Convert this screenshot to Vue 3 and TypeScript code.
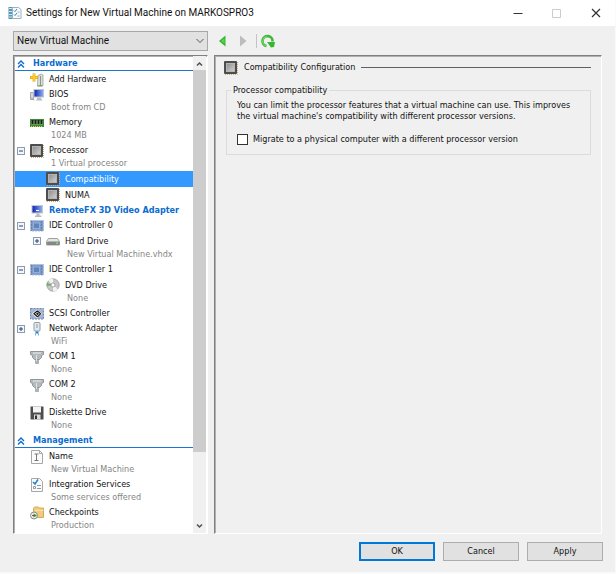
<script setup lang="ts">
import { ref } from 'vue'

interface Item {
  id: string
  label: string
  detail?: string
  icon: string
  level: 0 | 1
  toggle?: 'open' | 'closed'
  strong?: boolean
}

interface Section {
  title: string
  items: Item[]
}

const sections: Section[] = [
  {
    title: 'Hardware',
    items: [
      { id: 'add', label: 'Add Hardware', icon: 'add', level: 0 },
      { id: 'bios', label: 'BIOS', detail: 'Boot from CD', icon: 'bios', level: 0 },
      { id: 'memory', label: 'Memory', detail: '1024 MB', icon: 'memory', level: 0 },
      { id: 'cpu', label: 'Processor', detail: '1 Virtual processor', icon: 'chip', level: 0, toggle: 'open' },
      { id: 'compat', label: 'Compatibility', icon: 'chip', level: 1 },
      { id: 'numa', label: 'NUMA', icon: 'chip', level: 1 },
      { id: 'remotefx', label: 'RemoteFX 3D Video Adapter', icon: 'monitor', level: 0, strong: true },
      { id: 'ide0', label: 'IDE Controller 0', icon: 'ide', level: 0, toggle: 'open' },
      { id: 'hdd', label: 'Hard Drive', detail: 'New Virtual Machine.vhdx', icon: 'drive', level: 1, toggle: 'closed' },
      { id: 'ide1', label: 'IDE Controller 1', icon: 'ide', level: 0, toggle: 'open' },
      { id: 'dvd', label: 'DVD Drive', detail: 'None', icon: 'disc', level: 1 },
      { id: 'scsi', label: 'SCSI Controller', icon: 'scsi', level: 0 },
      { id: 'net', label: 'Network Adapter', detail: 'WiFi', icon: 'network', level: 0, toggle: 'closed' },
      { id: 'com1', label: 'COM 1', detail: 'None', icon: 'serial', level: 0 },
      { id: 'com2', label: 'COM 2', detail: 'None', icon: 'serial', level: 0 },
      { id: 'floppy', label: 'Diskette Drive', detail: 'None', icon: 'floppy', level: 0 },
    ],
  },
  {
    title: 'Management',
    items: [
      { id: 'name', label: 'Name', detail: 'New Virtual Machine', icon: 'name', level: 0 },
      { id: 'integration', label: 'Integration Services', detail: 'Some services offered', icon: 'checklist', level: 0 },
      { id: 'checkpoints', label: 'Checkpoints', detail: 'Production', icon: 'folder', level: 0 },
    ],
  },
]

const selected = ref('compat')
const machine = ref('New Virtual Machine')
const migrate = ref(false)
</script>

<template>
  <div class="window">
    <svg class="defs" aria-hidden="true">
      <defs>
        <linearGradient id="metal" x1="0" y1="0" x2="1" y2="1">
          <stop offset="0" stop-color="#8d8d8d" />
          <stop offset="1" stop-color="#d2d2d2" />
        </linearGradient>
        <linearGradient id="screen" x1="0" y1="0" x2="1" y2="0">
          <stop offset="0" stop-color="#0a1fb0" />
          <stop offset="1" stop-color="#8fb4f2" />
        </linearGradient>
      </defs>
      <symbol id="chip" viewBox="0 0 14 14">
        <path d="M1 13.500h12.500V1" fill="none" stroke="#c9ab7c" stroke-dasharray="1 1" />
        <rect x="0" y="0" width="13" height="13" rx="1" fill="#4d4d4d" />
        <rect x="2.500" y="2.500" width="8" height="8" fill="url(#metal)" stroke="#b4b4b4" />
      </symbol>
      <symbol id="add" viewBox="0 0 14 14">
        <path d="M8 2.500l3.500-1.500 1.500 1v10.500l-1 .8H7.500z" fill="#dcdedc" stroke="#9a9d9a" stroke-width=".8" />
        <path d="M10.500 3v9.500" stroke="#8f948f" />
        <path d="M8.500 12.500h4" stroke="#6fae5e" />
        <path d="M4 .5v8M0 4.500h8" stroke="#d9a21c" stroke-width="2.800" />
        <path d="M4 1v7M.5 4.500h7" stroke="#ffc926" stroke-width="2" />
      </symbol>
      <symbol id="bios" viewBox="0 0 14 14">
        <path d="M.5 4.500h3v7h-3z" fill="#d7dad9" stroke="#a3a8a8" />
        <rect x="4" y="1.500" width="9.500" height="7.500" fill="url(#screen)" stroke="#bcc4cf" />
        <path d="M7.500 9.500h3l2 3H6z" fill="#b9bdbc" />
        <path d="M1 9.500l3 3" stroke="#989c9b" />
      </symbol>
      <symbol id="monitor" viewBox="0 0 14 14">
        <rect x="2" y="1.500" width="10.500" height="7.500" fill="url(#screen)" stroke="#c2c8ce" />
        <path d="M6.500 9.500h3v2h2V13h-6.500v-1.500h1.500z" fill="#b8bbbd" />
        <path d="M6 6.500h3" stroke="#fff" />
      </symbol>
      <symbol id="memory" viewBox="0 0 14 14">
        <rect y="3" width="14" height="8" fill="#3b8a34" />
        <path d="M1 4.500h12v4H1z" fill="#8db779" />
        <path d="M1.500 4h2v4h-2zM4.500 4h2v4h-2zM7.500 4h2v4h-2zM10.500 4h2v4h-2z" fill="#17231a" />
        <path d="M1 10.500h12" stroke="#e1c763" stroke-dasharray="1 1" />
      </symbol>
      <symbol id="ide" viewBox="0 0 14 14">
        <rect x=".5" y="1.500" width="13" height="10.500" fill="#7d9ccc" stroke="#a9bbd9" stroke-dasharray="2 1" />
        <rect x="3.500" y="4" width="6" height="5.500" fill="#6285b9" stroke="#93aed8" />
        <path d="M11.500 2v10M1.500 2v10" stroke="#5f80b3" stroke-dasharray="2 1" />
      </symbol>
      <symbol id="scsi" viewBox="0 0 14 14">
        <rect x=".5" y="1.500" width="13" height="10.500" fill="#a3b5d3" stroke="#6e88b2" stroke-dasharray="2 1" />
        <path d="M7 2.500l5 4.300-5 4.200-5-4.200z" fill="#fff" />
        <path d="M7.500 3.800L4 6.800l3.500 3M7.500 3.800L10.500 6.800l-3 3" fill="none" stroke="#161616" stroke-width="1.200" />
        <circle cx="7.500" cy="6.800" r="1.200" fill="#222" />
      </symbol>
      <symbol id="drive" viewBox="0 0 14 14">
        <path d="M2.500 4.500h9l2 3v3.500H.5V7.500z" fill="#e5e5e5" stroke="#a0a0a0" />
        <rect x="1" y="7.500" width="12.500" height="3.500" rx="1" fill="#848784" />
        <rect x="10" y="8.500" width="2" height="1.500" fill="#65ef58" />
      </symbol>
      <symbol id="disc" viewBox="0 0 14 14">
        <circle cx="7" cy="7" r="6.200" fill="#c7c7c7" stroke="#999" stroke-width=".8" />
        <path d="M7 7L2 2.500A6.500 6.500 0 0 1 7 .8zM7 7l5 4.500a6.500 6.500 0 0 1-5 1.700z" fill="#f3f3f3" />
        <path d="M7 7L.9 8V5z" fill="#62b45f" />
        <circle cx="7" cy="7" r="2" fill="#fff" stroke="#888" stroke-width=".7" />
      </symbol>
      <symbol id="network" viewBox="0 0 14 14">
        <rect x="4" y=".5" width="6" height="8.500" rx="1" fill="#e1e8ee" stroke="#8e9ba5" />
        <path d="M7 2v4" stroke="#8a98a4" />
        <path d="M5.500 9.500h3v2h-3z" fill="#247ccc" />
        <path d="M5.500 11.500v2M8.500 11.500v2" stroke="#63a9e4" />
      </symbol>
      <symbol id="serial" viewBox="0 0 14 14">
        <path d="M.5 1.500h13v3l-2 1v2l-2 2h-5l-2-2v-2l-2-1z" fill="#b5bbbd" stroke="#8f9698" />
        <path d="M3 3h8" stroke="#e8ecec" />
        <path d="M5.500 9.500h3v4h-3z" fill="#aeb4b5" stroke="#8f9698" stroke-width=".6" />
        <path d="M6.500 5v6" stroke="#e0e4e5" />
      </symbol>
      <symbol id="floppy" viewBox="0 0 14 14">
        <path d="M.5.500h13v13H.5z" fill="#4b4c4e" />
        <path d="M3 .5h8v6H3z" fill="#f4f4f4" />
        <path d="M4 8.500h6.500v5H4z" fill="#d9d9d9" />
        <path d="M5 9.500h2v3.500H5z" fill="#313131" />
      </symbol>
      <symbol id="name" viewBox="0 0 14 14">
        <path d="M1.500.5h8l3 3v10h-11z" fill="#fafafa" stroke="#a8a8a8" />
        <path d="M9.500.5v3h3" fill="none" stroke="#a8a8a8" />
        <path d="M4.500 4h4M6.500 4v6.500M4.500 10.500h4" stroke="#777" />
      </symbol>
      <symbol id="checklist" viewBox="0 0 14 14">
        <path d="M1.500.5h8l3 3v10h-11z" fill="#fafafa" stroke="#a8a8a8" />
        <path d="M3 4l2 2 3-4.500" fill="none" stroke="#2384d1" stroke-width="1.600" />
        <path d="M7 7.500h4M7 10.500h4" stroke="#8c9aa4" />
        <path d="M3.500 8.500h2v2h-2z" fill="#fff" stroke="#9a9a9a" />
      </symbol>
      <symbol id="folder" viewBox="0 0 14 14">
        <path d="M3.500 2.500l1-1.500h4l1 1h4v9.500h-10z" fill="#f0cb7c" stroke="#d4ab58" />
        <path d="M5 4.500h8.500" stroke="#fbe4ae" />
        <circle cx="4" cy="9.500" r="3.500" fill="#eceeec" stroke="#8b8b8b" />
        <path d="M3.500 7.500l3.500 2-3.500 2z" fill="#35933b" />
        <path d="M4 9.500H2" stroke="#b43b2c" />
      </symbol>
    </svg>

    <header class="titlebar">
      <svg class="app-icon" viewBox="0 0 14 14" aria-hidden="true">
        <path d="M.5 1h5v12h-5z" fill="#5a93b3" />
        <path d="M1 2.500h3.500M1 5.500h3.500M1 8.500h3.500M1 11h3.500" stroke="#cfe9f5" />
        <path d="M4.500 1.500h6l2.500 2v9H4.500z" fill="#f7fbfd" stroke="#9db2bf" />
        <path d="M6 4.500l1 1 2-2.500M6 8.500l1 1 2-2.500" fill="none" stroke="#2b86c4" />
        <path d="M9.500 6h2M9.500 10h2" stroke="#8fa4b0" />
      </svg>
      <h1 class="title">Settings for New Virtual Machine on MARKOSPRO3</h1>
      <div class="window-buttons">
        <button type="button" aria-label="Minimize">
          <svg viewBox="0 0 10 10"><path d="M.5 5.500h9" stroke="#333" /></svg>
        </button>
        <button type="button" aria-label="Maximize" disabled>
          <svg viewBox="0 0 10 10"><path d="M.5 1.500h8v8h-8z" fill="none" stroke="#ccc" /></svg>
        </button>
        <button type="button" aria-label="Close">
          <svg viewBox="0 0 10 10"><path d="M1 1l8 8M9 1L1 9" fill="none" stroke="#333" stroke-width="1.200" /></svg>
        </button>
      </div>
    </header>

    <div class="toolbar">
      <div class="picker">
        <select v-model="machine" aria-label="Virtual machine">
          <option>New Virtual Machine</option>
        </select>
        <svg class="picker-arrow" viewBox="0 0 8 6" aria-hidden="true">
          <path d="M.5 1L4 4.500 7.500 1" fill="none" stroke="#555" />
        </svg>
      </div>
      <button type="button" class="tool" aria-label="Back">
        <svg viewBox="0 0 14 14"><path d="M9.500 1.500v11L3 7z" fill="#2fb52b" /><path d="M8.500 4v5.500L5 7z" fill="#5ad24e" /></svg>
      </button>
      <button type="button" class="tool" aria-label="Forward" disabled>
        <svg viewBox="0 0 14 14"><path d="M4 1.500v11L10.500 7z" fill="#bcbcbc" /></svg>
      </button>
      <span class="divider"></span>
      <button type="button" class="tool" aria-label="Refresh">
        <svg viewBox="0 0 14 14">
          <path d="M5.500 12A5 5 0 1 1 11.500 7.500" fill="none" stroke="#3fb837" stroke-width="2.600" />
          <path d="M5.500 11.800A4.700 4.700 0 0 1 6 2.500" fill="none" stroke="#7ddc73" />
          <path d="M6 8h8l-1 5-3 .5z" fill="#36b730" />
        </svg>
      </button>
    </div>

    <main class="body">
      <nav class="sidebar" aria-label="Settings">
        <div class="list">
          <section v-for="section in sections" :key="section.title">
            <h2 class="section-title">
              <svg class="collapse" viewBox="0 0 8 8" aria-hidden="true">
                <path d="M1 4l3-3 3 3M1 7.500l3-3 3 3" fill="none" stroke="#0a6bd0" stroke-width="1.400" />
              </svg>
              {{ section.title }}
            </h2>
            <ul>
              <li v-for="item in section.items" :key="item.id" :class="{ child: item.level === 1 }">
                <button
                  type="button"
                  class="row"
                  :class="{ selected: selected === item.id, strong: item.strong }"
                  @click="selected = item.id"
                >
                  <svg class="toggle" viewBox="0 0 8 8" aria-hidden="true">
                    <g v-if="item.toggle">
                      <rect x=".5" y=".5" width="7" height="7" fill="#f4f6f9" stroke="#8d9db0" />
                      <path d="M2 4h4" stroke="#23477d" />
                      <path v-if="item.toggle === 'closed'" d="M4 2v4" stroke="#23477d" />
                    </g>
                  </svg>
                  <svg class="icon" viewBox="0 0 14 14" aria-hidden="true"><use :href="'#' + item.icon" /></svg>
                  <span class="label">{{ item.label }}</span>
                  <span v-if="item.detail" class="detail">{{ item.detail }}</span>
                </button>
              </li>
            </ul>
          </section>
        </div>
        <div class="scrollbar" aria-hidden="true">
          <svg viewBox="0 0 13 14"><path d="M4 9.500L6.500 7 9 9.500" fill="none" stroke="#505050" stroke-width="1.500" /></svg>
          <div class="track"><div class="thumb"></div></div>
          <svg viewBox="0 0 13 14"><path d="M4 5.500L6.500 8 9 5.500" fill="none" stroke="#505050" stroke-width="1.500" /></svg>
        </div>
      </nav>

      <section class="pane">
        <div class="pane-head">
          <svg class="icon" viewBox="0 0 14 14" aria-hidden="true"><use href="#chip" /></svg>
          <h2>Compatibility Configuration</h2>
          <span class="rule"></span>
        </div>
        <fieldset>
          <legend>Processor compatibility</legend>
          <p>
            You can limit the processor features that a virtual machine can use. This improves
            the virtual machine's compatibility with different processor versions.
          </p>
          <label class="check">
            <input v-model="migrate" type="checkbox" />
            <span>Migrate to a physical computer with a different processor version</span>
          </label>
        </fieldset>
      </section>
    </main>

    <footer class="actions">
      <button type="button" class="primary">OK</button>
      <button type="button">Cancel</button>
      <button type="button">Apply</button>
    </footer>
  </div>
</template>

<style>
body {
  margin: 0;
  background: #fff;
}
</style>

<style scoped>
.window {
  box-sizing: border-box;
  display: flex;
  flex-direction: column;
  min-height: 100vh;
  border-right: 1px solid #fafafa;
  border-bottom: 2px solid #fafafa;
  background: #f0f0f0;
  color: #111;
  font-family: 'DejaVu Sans Condensed', 'Noto Sans', sans-serif;
  font-size: 9px;
  line-height: 13px;
}

.defs {
  position: absolute;
  width: 0;
  height: 0;
}

svg {
  display: block;
  flex: none;
}

button,
select,
input {
  margin: 0;
  padding: 0;
  color: inherit;
  font: inherit;
}

.titlebar {
  display: flex;
  align-items: center;
  height: 26px;
  padding-left: 8px;
  background: #fff;
}

.app-icon {
  width: 14px;
  height: 14px;
}

.title {
  flex: 1;
  margin: 0 0 0 4px;
  font-family: Roboto, sans-serif;
  font-size: 10px;
  font-weight: 400;
  line-height: 16px;
}

.window-buttons {
  display: flex;
}

.window-buttons button {
  display: grid;
  place-items: center;
  width: 39px;
  height: 26px;
  border: 0;
  background: transparent;
}

.window-buttons svg {
  width: 10px;
  height: 10px;
}

.toolbar {
  display: flex;
  align-items: center;
  height: 29px;
  padding: 0 13px;
}

.picker {
  position: relative;
  width: 195px;
  margin-right: 8px;
}

.picker select {
  display: block;
  width: 100%;
  height: 20px;
  padding: 0 20px 0 3px;
  border: 1px solid #a8a8a8;
  border-radius: 0;
  background: #e1e1e1;
  font-family: Roboto, sans-serif;
  font-size: 10px;
  appearance: none;
}

.picker-arrow {
  position: absolute;
  top: 7px;
  right: 4px;
  width: 8px;
  height: 6px;
}

.tool {
  width: 14px;
  height: 14px;
  margin-right: 6px;
  border: 0;
  background: transparent;
}

.tool svg {
  width: 14px;
  height: 14px;
}

.divider {
  width: 1px;
  height: 14px;
  margin-right: 4px;
  background: #c4c4c4;
}

.body {
  display: flex;
  flex: 1;
  gap: 6px;
  padding: 0 13px;
}

.sidebar,
.pane {
  box-sizing: border-box;
  border: 1px solid;
  border-color: #808080 #fff #fff #808080;
  box-shadow: inset 1px 1px #b0b0b0;
}

.sidebar {
  display: flex;
  width: 195px;
  padding: 0 1px;
  background: #fff;
}

.list {
  flex: 1;
}

.section-title {
  display: flex;
  align-items: flex-end;
  height: 14px;
  margin: 0 0 1px;
  padding-left: 2px;
  border-bottom: 1px solid #1a76d2;
  color: #0a6bd0;
  font-size: 9px;
  font-weight: 700;
}

.collapse {
  width: 8px;
  height: 8px;
  margin: 0 8px 2px 0;
}

ul {
  margin: 0;
  padding: 0;
  list-style: none;
}

.row {
  display: grid;
  grid-template-columns: 8px 14px 1fr;
  align-items: center;
  width: 100%;
  padding-left: 2px;
  column-gap: 5px;
  border: 0;
  background: transparent;
  text-align: left;
  white-space: nowrap;
}

.child .row {
  padding-left: 18px;
}

.toggle {
  width: 8px;
  height: 8px;
}

.icon {
  width: 14px;
  height: 14px;
}

.label {
  line-height: 15px;
}

.child .label {
  line-height: 16px;
}

.detail {
  grid-column: 3;
  padding: 0 0 2px 2px;
  color: #858585;
  line-height: 11px;
}

.selected {
  background: #3399ff;
  color: #fff;
}

.strong {
  color: #0a6bd0;
  font-weight: 700;
}

.scrollbar {
  display: flex;
  flex-direction: column;
  width: 13px;
  background: #f0f0f0;
}

.scrollbar svg {
  width: 13px;
  height: 14px;
}

.track {
  flex: 1;
}

.thumb {
  height: 85%;
  background: #cdcdcd;
}

.pane {
  flex: 1;
  min-width: 0;
  padding: 3px 10px 4px 9px;
}

.pane-head {
  display: flex;
  align-items: center;
  height: 17px;
}

.pane-head h2 {
  margin: 0 6px;
  font-size: 9px;
  font-weight: 400;
}

.rule {
  flex: 1;
  height: 1px;
  background: #606060;
}

fieldset {
  margin: 8px 0 0 2px;
  padding: 3px 10px 8px;
  border: 1px solid #dcdcdc;
}

legend {
  margin-left: -6px;
  padding: 0 2px;
}

p {
  margin: 0;
  line-height: 11px;
}

.check {
  display: flex;
  align-items: center;
  gap: 5px;
  margin-top: 11px;
}

.check input {
  width: 11px;
  height: 11px;
  border: 1px solid #333;
  background: #fff;
  appearance: none;
}

.check input:checked {
  background: #0a6bd0;
}

.actions {
  display: flex;
  justify-content: flex-end;
  gap: 8px;
  padding: 8px 12px 11px;
}

.actions button {
  width: 76px;
  height: 19px;
  border: 1px solid #adadad;
  background: #e1e1e1;
}

.actions .primary {
  border: 2px solid #0078d7;
}
</style>
